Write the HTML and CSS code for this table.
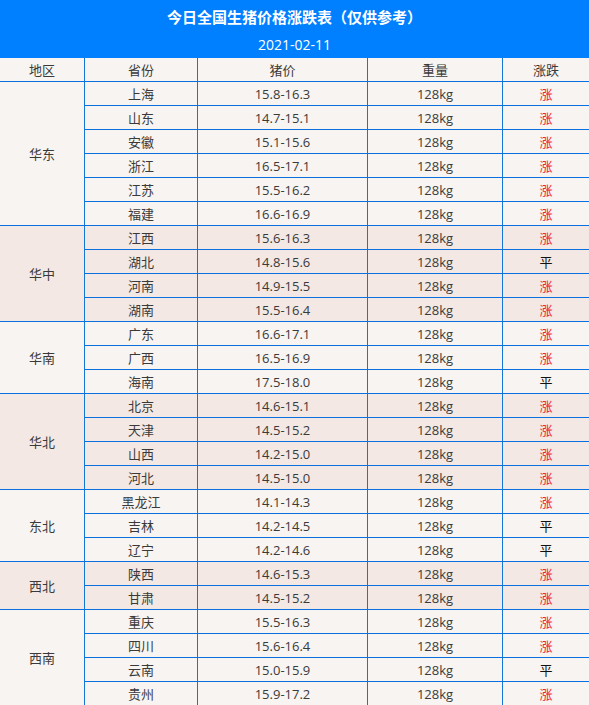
FILE: index.html
```html
<!DOCTYPE html>
<html lang="zh">
<head>
<meta charset="utf-8">
<link rel="stylesheet" href="styles.css">
</head>
<body>
<div class="banner">
  <div class="title">今日全国生猪价格涨跌表（仅供参考）</div>
  <div class="date">2021-02-11</div>
</div>
<table class="prices">
  <colgroup>
    <col class="c1"><col class="c2"><col class="c3"><col class="c4"><col class="c5">
  </colgroup>
  <thead>
    <tr><th>地区</th><th>省份</th><th>猪价</th><th>重量</th><th>涨跌</th></tr>
  </thead>
  <tbody class="light">
    <tr><td class="region" rowspan="6">华东</td><td>上海</td><td>15.8-16.3</td><td>128kg</td><td class="up">涨</td></tr>
    <tr><td>山东</td><td>14.7-15.1</td><td>128kg</td><td class="up">涨</td></tr>
    <tr><td>安徽</td><td>15.1-15.6</td><td>128kg</td><td class="up">涨</td></tr>
    <tr><td>浙江</td><td>16.5-17.1</td><td>128kg</td><td class="up">涨</td></tr>
    <tr><td>江苏</td><td>15.5-16.2</td><td>128kg</td><td class="up">涨</td></tr>
    <tr><td>福建</td><td>16.6-16.9</td><td>128kg</td><td class="up">涨</td></tr>
  </tbody>
  <tbody class="dark">
    <tr><td class="region" rowspan="4">华中</td><td>江西</td><td>15.6-16.3</td><td>128kg</td><td class="up">涨</td></tr>
    <tr><td>湖北</td><td>14.8-15.6</td><td>128kg</td><td class="flat">平</td></tr>
    <tr><td>河南</td><td>14.9-15.5</td><td>128kg</td><td class="up">涨</td></tr>
    <tr><td>湖南</td><td>15.5-16.4</td><td>128kg</td><td class="up">涨</td></tr>
  </tbody>
  <tbody class="light">
    <tr><td class="region" rowspan="3">华南</td><td>广东</td><td>16.6-17.1</td><td>128kg</td><td class="up">涨</td></tr>
    <tr><td>广西</td><td>16.5-16.9</td><td>128kg</td><td class="up">涨</td></tr>
    <tr><td>海南</td><td>17.5-18.0</td><td>128kg</td><td class="flat">平</td></tr>
  </tbody>
  <tbody class="dark">
    <tr><td class="region" rowspan="4">华北</td><td>北京</td><td>14.6-15.1</td><td>128kg</td><td class="up">涨</td></tr>
    <tr><td>天津</td><td>14.5-15.2</td><td>128kg</td><td class="up">涨</td></tr>
    <tr><td>山西</td><td>14.2-15.0</td><td>128kg</td><td class="up">涨</td></tr>
    <tr><td>河北</td><td>14.5-15.0</td><td>128kg</td><td class="up">涨</td></tr>
  </tbody>
  <tbody class="light">
    <tr><td class="region" rowspan="3">东北</td><td>黑龙江</td><td>14.1-14.3</td><td>128kg</td><td class="up">涨</td></tr>
    <tr><td>吉林</td><td>14.2-14.5</td><td>128kg</td><td class="flat">平</td></tr>
    <tr><td>辽宁</td><td>14.2-14.6</td><td>128kg</td><td class="flat">平</td></tr>
  </tbody>
  <tbody class="dark">
    <tr><td class="region" rowspan="2">西北</td><td>陕西</td><td>14.6-15.3</td><td>128kg</td><td class="up">涨</td></tr>
    <tr><td>甘肃</td><td>14.5-15.2</td><td>128kg</td><td class="up">涨</td></tr>
  </tbody>
  <tbody class="light">
    <tr><td class="region" rowspan="4">西南</td><td>重庆</td><td>15.5-16.3</td><td>128kg</td><td class="up">涨</td></tr>
    <tr><td>四川</td><td>15.6-16.4</td><td>128kg</td><td class="up">涨</td></tr>
    <tr><td>云南</td><td>15.0-15.9</td><td>128kg</td><td class="flat">平</td></tr>
    <tr><td>贵州</td><td>15.9-17.2</td><td>128kg</td><td class="up">涨</td></tr>
  </tbody>
</table>
</body>
</html>
```
FILE: styles.css
```css
html, body {
  margin: 0;
  padding: 0;
  background: #f8f4f1;
}
body {
  width: 589px;
  font-family: "Open Sans", "Noto Sans CJK SC", sans-serif;
  color: #3a3a3a;
}
.banner {
  background: #0080ff;
  color: #fff;
  text-align: center;
  height: 58px;
  overflow: hidden;
}
.title {
  font-family: "Noto Sans CJK SC", sans-serif;
  font-weight: bold;
  font-size: 15px;
  line-height: 34px;
  height: 34px;
  overflow: hidden;
}
.date {
  font-size: 14px;
  line-height: 22px;
  height: 24px;
  overflow: hidden;
}
.prices {
  width: 589px;
  border-collapse: separate;
  border-spacing: 0;
  table-layout: fixed;
  font-size: 13px;
}
.c1 { width: 85px; }
.c2 { width: 113px; }
.c3 { width: 170px; }
.c4 { width: 135px; }
.c5 { width: 86px; }
.prices th, .prices td {
  padding: 0;
  height: 23px;
  line-height: 16px;
  vertical-align: middle;
  text-align: center;
  font-weight: normal;
  border: 0;
  border-right: 1px solid #1576d6;
  border-bottom: 1px solid #0a6fe0;
  font-family: "Open Sans", "Noto Sans CJK SC", sans-serif;
}
.prices th:last-child, .prices td:last-child {
  border-right: none;
}
.prices thead th {
  background: #f8f4f1;
}
.light td { background: #f8f4f1; }
.dark td { background: #f3e8e3; }
.up {
  color: #ee2233;
  font-weight: bold;
}
.flat {
  color: #111;
  font-weight: bold;
}
```
